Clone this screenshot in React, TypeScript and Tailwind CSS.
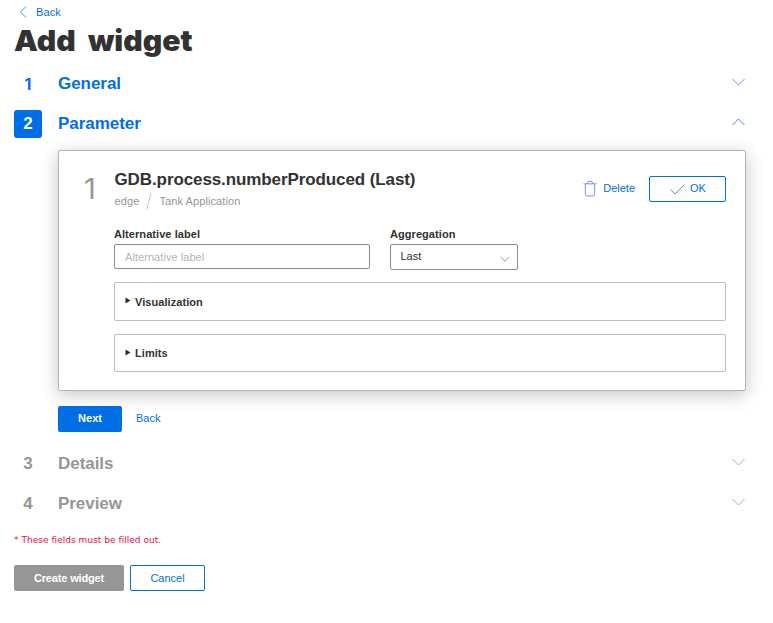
import type { ReactNode } from 'react';

function Chevron({ up = false, className, small = false }: { up?: boolean; className: string; small?: boolean }) {
  return (
    <svg width={small ? 10 : 13} height={small ? 6 : 8} viewBox="0 0 13 8" fill="none" stroke="currentColor" strokeWidth={small ? 1.3 : 1} className={className}>
      <path d={up ? 'M.5 7 6.5 1l6 6' : 'M.5 1l6 6 6-6'} />
    </svg>
  );
}

function Step({ n, title, active, muted, up }: { n: number; title: string; active?: boolean; muted?: boolean; up?: boolean }) {
  return (
    <div className={`flex h-7 items-center text-[17px] font-bold ${muted ? 'text-[#969696]' : 'text-[#006fe6]'}`}>
      <span className={`flex size-7 items-center justify-center rounded-[3px] ${active ? 'bg-[#006fe6] text-white' : ''} ${n === 1 ? "pb-px font-['Inter',sans-serif] text-[16px]" : ''}`}>{n}</span>
      <span className="ml-4 grow tracking-[-0.05px]">{title}</span>
      <Chevron up={up} className={`mr-[1.5px] mb-1 ${muted ? 'text-[#c2a698]' : up ? 'text-[#5580e0]' : 'text-[#9480d8]'}`} />
    </div>
  );
}

function Panel({ children, className }: { children: ReactNode; className: string }) {
  return (
    <div className={`flex items-center rounded-[2px] border border-[#bebebe] pl-2.5 font-bold tracking-[0.06px] ${className}`}>
      <svg width="6" height="7" viewBox="0 0 6 7" className="mr-1 mb-0.5 text-[#222c33]"><path d="M.5.5 5.5 3.5.5 6.5z" fill="currentColor" /></svg>
      {children}
    </div>
  );
}

export default function App() {
  return (
    <main className="h-[623px] w-[773px] overflow-hidden bg-white pt-1 pl-3.5 font-['Liberation_Sans',Arial,sans-serif] text-[11px] leading-4 text-[#323232]">
      <a className="flex h-4 items-center tracking-[0.1px] text-[#006fe6]">
        <svg width="8" height="12" viewBox="0 0 8 12" fill="none" stroke="#4d90e8" className="mr-[9px] ml-[5px]"><path d="M7 .5 1.5 6 7 11.5" /></svg>
        Back
      </a>
      <h1 className="h-[50px] w-fit origin-left scale-x-[1.04] font-['Inter',sans-serif] text-[29px] leading-[42px] font-black [word-spacing:6px]">Add widget</h1>

      <div className="flex w-[732px] flex-col gap-3">
        <Step n={1} title="General" />
        <Step n={2} title="Parameter" active up />
      </div>

      <section className="mt-3 ml-11 flex h-[241px] w-[688px] rounded-[2px] border border-[#b4b4b4] bg-white shadow-[0_4px_18px_rgba(0,0,0,0.23)]">
        <div className="w-[55px] shrink-0 pt-[22px] pl-[25px] font-['Inter',sans-serif] text-[29px] leading-8 font-normal text-[#969696]">1</div>
        <div className="w-[612px] pt-[19px]">
          <header className="flex h-[41px] justify-between">
            <div className="pl-[0.5px]">
              <h2 className="h-5 text-[17px] leading-5 font-bold tracking-[-0.1px]">GDB.process.numberProduced (Last)</h2>
              <div className="flex h-[21px] items-center tracking-[0.1px] text-[#969696]">
                edge
                <svg width="6" height="18" viewBox="0 0 6 18" className="mx-[7px]"><path d="M5 1 1 17" stroke="#c8c8c8" /></svg>
                Tank Application
              </div>
            </div>
            <div className="flex h-[26px] translate-y-[6px] items-center text-[#006fe6]">
              <svg width="14" height="17" viewBox="0 0 15 17" fill="none" stroke="#6f8be2" className="mr-[6px] mb-px">
                <path d="M.5 3.5h14M2.5 4v10q0 2.5 2 2.5h6q2 0 2-2.5V4M4.5 3.5q0-3 3-3t3 3" />
              </svg>
              <span className="mb-0.5">Delete</span>
              <button className="ml-3.5 flex h-[26px] w-[77px] items-center rounded-[2px] border border-[#006fe6] pb-0.5 pl-5">
                <svg width="15" height="11" viewBox="0 0 15 11" fill="none" stroke="#6f8be2" className="mr-[5px] translate-y-px"><path d="M.5 5.5 5 10 14.5.5" /></svg>
                OK
              </button>
            </div>
          </header>

          <div className="mt-[15px] flex gap-5">
            <label className="w-64 font-bold tracking-[0.06px]">
              Alternative label
              <input placeholder="Alternative label" className="mt-0.5 block h-[25px] w-full rounded-[2px] border border-[#8c8c8c] px-2.5 font-normal placeholder:text-[#b4b4b4]" />
            </label>
            <div className="w-32">
              <div className="font-bold tracking-[0.06px]">Aggregation</div>
              <div className="mt-0.5 flex h-[26px] items-center justify-between rounded-[2px] border border-[#8c8c8c] pr-[7px] pl-[9.5px]">
                <span className="mb-0.5">Last</span>
                <Chevron small className="mt-[3px] text-[#b58c78]" />
              </div>
            </div>
          </div>
          <Panel className="mt-3 h-[39px]">Visualization</Panel>
          <Panel className="mt-[13px] h-[38px]">Limits</Panel>
        </div>
      </section>

      <div className="mt-[15px] ml-11 flex h-[26px] items-center text-[#006fe6]">
        <button className="h-[26px] w-16 rounded-[2px] bg-[#006fe6] pb-0.5 font-bold text-white">Next</button>
        <a className="mb-0.5 ml-3.5">Back</a>
      </div>

      <div className="mt-[18px] flex w-[732px] flex-col gap-3">
        <Step n={3} title="Details" muted />
        <Step n={4} title="Preview" muted />
      </div>

      <p className="mt-3.5 h-[33px] font-['DejaVu_Sans',sans-serif] text-[9px] tracking-[0.03px] text-[#f00a46]">* These fields must be filled out.</p>
      <div className="flex gap-1.5">
        <button className="h-[26px] w-[110px] rounded-[2px] bg-[#969696] font-bold tracking-[-0.15px] text-white">Create widget</button>
        <button className="h-[26px] w-[75px] rounded-[2px] border border-[#006fe6] text-[#006fe6]">Cancel</button>
      </div>
    </main>
  );
}
